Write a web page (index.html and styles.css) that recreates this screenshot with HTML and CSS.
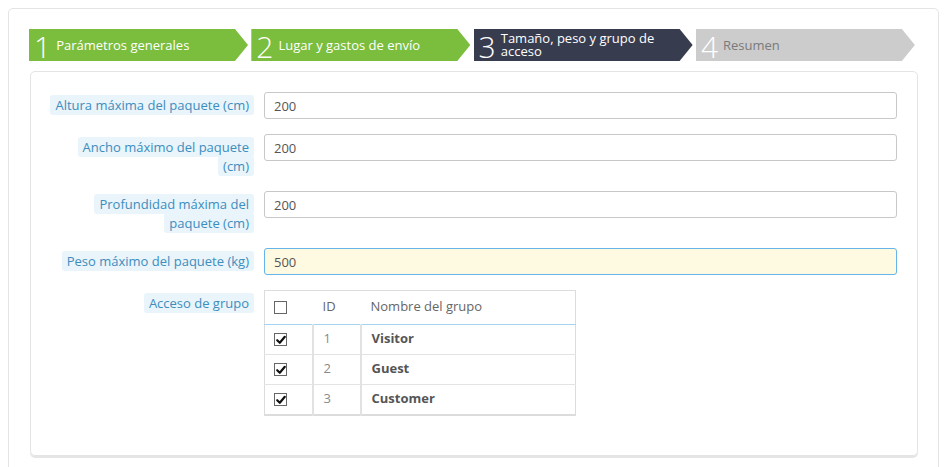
FILE: index.html
```html
<!DOCTYPE html>
<html lang="es">
<head>
<meta charset="utf-8">
<title>Asistente de transportista</title>
<link rel="stylesheet" href="styles.css">
</head>
<body>
<div class="outer">
  <div class="steps">
    <div class="step done"><span class="num">1</span><span class="label">Parámetros generales</span></div>
    <div class="step done"><span class="num">2</span><span class="label">Lugar y gastos de envío</span></div>
    <div class="step current"><span class="num">3</span><span class="label">Tamaño, peso y grupo de<br>acceso</span></div>
    <div class="step todo"><span class="num">4</span><span class="label">Resumen</span></div>
  </div>
  <div class="panel">
    <div class="row">
      <div class="lbl"><span>Altura máxima del paquete (cm)</span></div>
      <input class="field" type="text" value="200">
    </div>
    <div class="row">
      <div class="lbl"><span>Ancho máximo del paquete<br>(cm)</span></div>
      <input class="field" type="text" value="200">
    </div>
    <div class="row">
      <div class="lbl"><span>Profundidad máxima del<br>paquete (cm)</span></div>
      <input class="field" type="text" value="200">
    </div>
    <div class="row">
      <div class="lbl"><span>Peso máximo del paquete (kg)</span></div>
      <input class="field focus" type="text" value="500">
    </div>
    <div class="row last">
      <div class="lbl"><span>Acceso de grupo</span></div>
      <div>
        <table class="groups">
          <thead>
            <tr>
              <th class="c1"><span class="cb"></span></th>
              <th class="c2">ID</th>
              <th class="c3">Nombre del grupo</th>
            </tr>
          </thead>
          <tbody>
            <tr>
              <td class="c1"><span class="cb on"><svg viewBox="0 0 12 12" width="12" height="12"><path d="M2.2 6.2 L4.8 8.8 L9.8 2.8" fill="none" stroke="#111" stroke-width="2.2" stroke-linecap="round" stroke-linejoin="round"/></svg></span></td>
              <td class="c2">1</td>
              <td class="c3"><b>Visitor</b></td>
            </tr>
            <tr>
              <td class="c1"><span class="cb on"><svg viewBox="0 0 12 12" width="12" height="12"><path d="M2.2 6.2 L4.8 8.8 L9.8 2.8" fill="none" stroke="#111" stroke-width="2.2" stroke-linecap="round" stroke-linejoin="round"/></svg></span></td>
              <td class="c2">2</td>
              <td class="c3"><b>Guest</b></td>
            </tr>
            <tr>
              <td class="c1"><span class="cb on"><svg viewBox="0 0 12 12" width="12" height="12"><path d="M2.2 6.2 L4.8 8.8 L9.8 2.8" fill="none" stroke="#111" stroke-width="2.2" stroke-linecap="round" stroke-linejoin="round"/></svg></span></td>
              <td class="c2">3</td>
              <td class="c3"><b>Customer</b></td>
            </tr>
          </tbody>
        </table>
      </div>
    </div>
  </div>
</div>
</body>
</html>
```
FILE: styles.css
```css
html, body {
  margin: 0;
  padding: 0;
  background: #fff;
  overflow: hidden;
}
body {
  font-family: "Open Sans", "Liberation Sans", sans-serif;
  font-size: 13px;
  color: #555;
  padding: 8px 9px 0 8px;
}
.outer {
  border: 1px solid #e4e4e4;
  border-radius: 5px;
  padding: 20px 20px 0 20px;
  height: 520px;
}
.steps {
  display: flex;
  gap: 3.3px;
}
.step {
  width: 219px;
  height: 32px;
  display: flex;
  align-items: center;
  padding-left: 5px;
  box-sizing: border-box;
  clip-path: polygon(0 0, calc(100% - 13px) 0, 100% 50%, calc(100% - 13px) 100%, 0 100%);
  color: #fff;
}
.step.done { background: #7bbd3d; }
.step.current { background: #383c4f; }
.step.todo { background: #cccccc; }
.step.todo .label { color: #7a7a7a; }
.num {
  font-size: 30px;
  font-weight: 300;
  line-height: 1;
  padding-top: 3px;
  margin-right: 5px;
}
.step .label {
  font-size: 13px;
  line-height: 13px;
}
.panel {
  margin: 10px 0 0 1px;
  border: 1px solid #e4e4e4;
  border-radius: 5px;
  padding: 20px 20px 39px 14px;
  box-shadow: 0 2px 0 rgba(0, 0, 0, 0.1);
}
.row {
  display: grid;
  grid-template-columns: 209px 1fr;
  column-gap: 10px;
  margin-bottom: 15px;
  align-items: start;
}
.row.last { margin-bottom: 0; }
.lbl {
  text-align: right;
  padding-top: 4px;
  line-height: 19px;
}
.lbl span {
  background: #e9f4fb;
  color: #3d8dbd;
  padding: 1px 5px;
  border-radius: 3px;
  -webkit-box-decoration-break: clone;
  box-decoration-break: clone;
}
.field {
  display: block;
  width: 100%;
  box-sizing: border-box;
  height: 27px;
  margin: 0;
  border: 1px solid #c8c8c8;
  border-radius: 3px;
  padding: 0 9px;
  font-family: "Open Sans", "Liberation Sans", sans-serif;
  font-size: 13px;
  color: #555;
  background: #fff;
  outline: none;
}
.field.focus {
  background: #fef9e1;
  border-color: #66b5ea;
}
.groups {
  width: 312px;
  border-collapse: collapse;
  border: 1px solid #dcdcdc;
  border-bottom: 2px solid #dcdcdc;
}
.groups th {
  height: 30px;
  text-align: left;
  font-weight: 400;
  color: #666;
  border-bottom: 1px solid #a6d3ef;
  padding: 0 0 3px 10px;
  vertical-align: middle;
}
.groups td {
  height: 26px;
  padding: 0 0 3px 10px;
  border-top: 1px solid #e3e3e3;
  vertical-align: middle;
}
.groups tbody tr:first-child td { border-top: none; }
.groups .c1 { width: 48px; padding-left: 9px; box-sizing: border-box; }
.groups .c2 { width: 48px; box-sizing: border-box; }
.groups td.c2, .groups td.c3 { border-left: 2px solid #e2e2e2; }
.groups td.c2 { color: #8a8a8a; }
.groups td.c3 b { color: #555; font-weight: 700; }
.cb {
  display: inline-block;
  width: 13px;
  height: 13px;
  box-sizing: border-box;
  border: 1.5px solid #666;
  background: #fff;
  vertical-align: middle;
  position: relative;
}
.cb svg {
  position: absolute;
  left: -0.5px;
  top: -0.5px;
}
```
